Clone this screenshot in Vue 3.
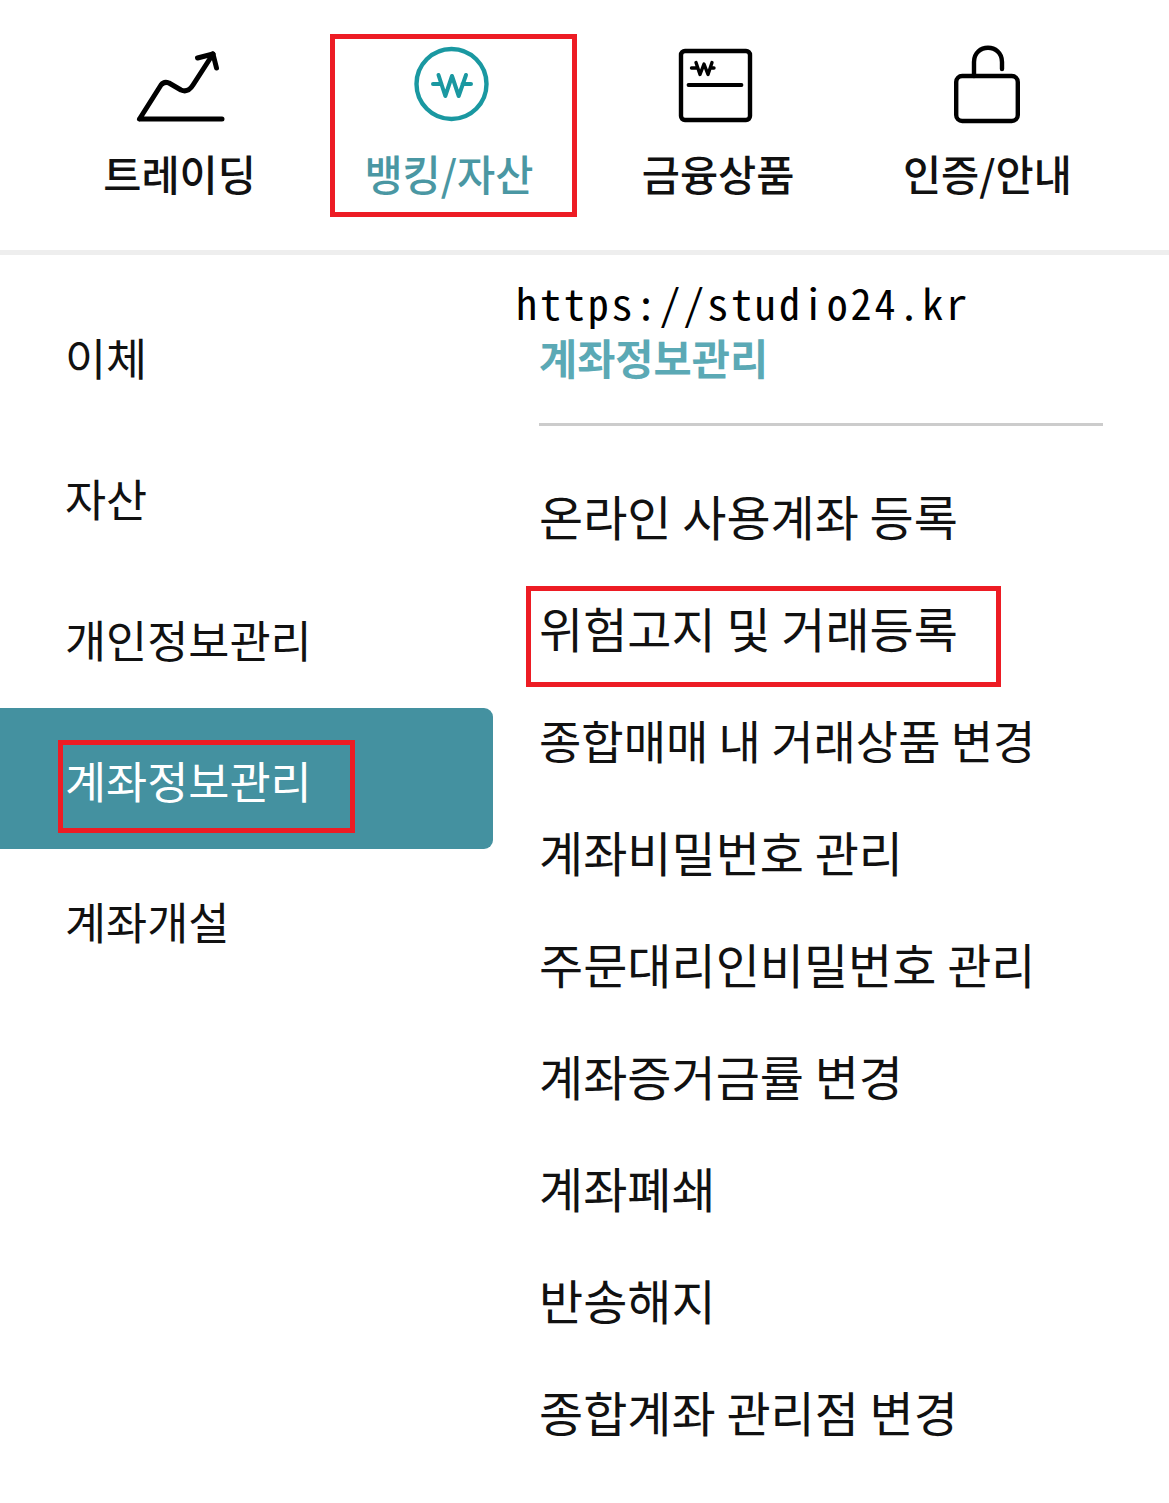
<template>
  <div class="page">
    <!-- Top tabs -->
    <nav class="tabs">
      <div
        v-for="tab in tabs"
        :key="tab.name"
        class="tab"
        :class="{ active: tab.active }"
      >
        <svg class="tab-icon" viewBox="0 0 100 92" fill="none" stroke="currentColor" stroke-linecap="round" stroke-linejoin="round">
          <template v-if="tab.icon === 'chart'">
            <path stroke-width="5" d="M8.5 81 H91 M8.5 81 L30 47 Q33 43 38 45 L50 52 Q57 55 62 47 L82 16" />
            <path stroke-width="5" d="M66.5 20 L82 16 L85.5 30" />
          </template>
          <template v-else-if="tab.icon === 'won'">
            <circle cx="51.5" cy="46" r="35" stroke-width="4.4" />
            <path stroke-width="4" d="M38.5 37 L45.3 58 L52 38 L58.7 58 L66 37 M33 46 H41.5 M62.5 46 H71" />
          </template>
          <template v-else-if="tab.icon === 'doc'">
            <rect x="12" y="13" width="69" height="69" rx="4" stroke-width="4.4" />
            <path stroke-width="3.8" d="M19.5 47 H72.5" />
            <path stroke-width="3.4" d="M27 24.5 L31 36.5 L35 26 L39 36.5 L43 24.5 M22.5 30 H28.5 M41.5 30 H45" />
          </template>
          <template v-else>
            <rect x="18.2" y="38" width="61.6" height="45" rx="6" stroke-width="4.4" />
            <path stroke-width="4.4" d="M36 38 V24 C36 5 64 5 64 24 V31" />
          </template>
        </svg>
        <span class="tab-label">{{ tab.name }}</span>
        <i v-if="tab.active" class="mark mark-tab"></i>
      </div>
    </nav>

    <div class="body">
      <!-- Left menu -->
      <ul class="side">
        <li
          v-for="item in sideItems"
          :key="item"
          class="side-item"
          :class="{ active: item === activeSide }"
        >
          <span class="side-text">
            {{ item }}
            <i v-if="item === activeSide" class="mark mark-side"></i>
          </span>
        </li>
      </ul>

      <!-- Right panel -->
      <section class="panel">
        <span class="url">https://studio24.kr</span>
        <h2 class="panel-title">{{ activeSide }}</h2>
        <ul class="links">
          <li
            v-for="link in links"
            :key="link"
            class="link"
            :class="{ tight: link === tightLink }"
          >
            <span class="link-text">
              {{ link }}
              <i v-if="link === markedLink" class="mark mark-link"></i>
            </span>
          </li>
        </ul>
      </section>
    </div>
  </div>
</template>

<script setup>
const tabs = [
  { name: '트레이딩', icon: 'chart' },
  { name: '뱅킹/자산', icon: 'won', active: true },
  { name: '금융상품', icon: 'doc' },
  { name: '인증/안내', icon: 'lock' }
]

const sideItems = ['이체', '자산', '개인정보관리', '계좌정보관리', '계좌개설']
const activeSide = '계좌정보관리'

const markedLink = '위험고지 및 거래등록'
const tightLink = '종합매매 내 거래상품 변경'
const links = [
  '온라인 사용계좌 등록',
  '위험고지 및 거래등록',
  '종합매매 내 거래상품 변경',
  '계좌비밀번호 관리',
  '주문대리인비밀번호 관리',
  '계좌증거금률 변경',
  '계좌폐쇄',
  '반송해지',
  '종합계좌 관리점 변경'
]
</script>

<style>
html,
body {
  margin: 0;
  background: #fff;
}
</style>

<style scoped>
.page {
  width: 1169px;
  height: 1503px;
  overflow: hidden;
  background: #fff;
  color: #111;
  font-family: "Noto Sans CJK KR", "Noto Sans", sans-serif;
}

ul {
  list-style: none;
  margin: 0;
  padding: 0;
}

.tabs {
  display: grid;
  grid-template-columns: repeat(4, 1fr);
  height: 250px;
  padding: 0 46px;
  border-bottom: 5px solid #eeeeee;
  box-sizing: content-box;
  width: 1077px;
}

.tab {
  position: relative;
  display: flex;
  flex-direction: column;
  align-items: center;
  padding-top: 38px;
}

.tab-icon {
  width: 100px;
  height: 92px;
  color: #000;
}

.tab.active .tab-icon {
  color: #1a98a1;
}

.tab-label {
  margin: 13px 2px 0 0;
  font-size: 41.5px;
  font-weight: 500;
  line-height: 60px;
  white-space: nowrap;
}

.tab.active .tab-label {
  color: #4a97a3;
}

.mark {
  position: absolute;
  box-sizing: border-box;
  border: 5px solid #ed1c24;
}

.mark-tab {
  left: 15px;
  top: 34px;
  width: 247px;
  height: 183px;
}

.body {
  display: flex;
  padding-top: 30px;
}

.side {
  width: 493px;
  flex: none;
}

.side-item {
  display: flex;
  align-items: center;
  height: 141px;
  padding: 0 0 0 65px;
  box-sizing: border-box;
  font-size: 44.7px;
}

.side-item.active {
  background: #4491a0;
  border-radius: 0 9px 9px 0;
  color: #fff;
}

.side-text {
  position: relative;
  top: 1px;
}

.mark-side {
  left: -7px;
  top: -7px;
  width: 297px;
  height: 93px;
}

.panel {
  position: relative;
  width: 564px;
  margin-left: 46px;
}

.url {
  position: absolute;
  left: -23px;
  top: -6px;
  font-family: "Noto Sans Mono CJK KR", "Liberation Mono", monospace;
  font-size: 42px;
  letter-spacing: 2.9px;
  line-height: 46px;
  color: #000;
  white-space: nowrap;
}

.panel-title {
  margin: 0;
  height: 141px;
  padding: 45px 0 0 0;
  box-sizing: border-box;
  border-bottom: 3px solid #cccccc;
  font-size: 41.5px;
  line-height: 54px;
  font-weight: 700;
  color: #5ba9b5;
}

.links {
  padding-top: 33px;
}

.link {
  display: flex;
  align-items: center;
  height: 112px;
  font-size: 48px;
  white-space: nowrap;
}

.link.tight {
  font-size: 46px;
}

.link-text {
  position: relative;
}

.mark-link {
  left: -13px;
  top: -6px;
  width: 475px;
  height: 101px;
}
</style>
